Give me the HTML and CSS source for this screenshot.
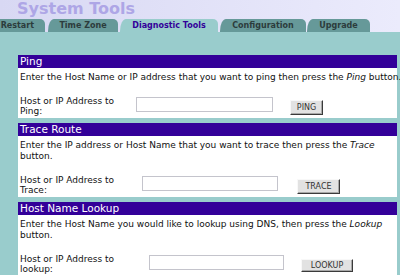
FILE: index.html
```html
<!DOCTYPE html>
<html>
<head>
<meta charset="utf-8">
<link rel="stylesheet" href="styles.css">
</head>
<body>
<div class="masthead">
  <div class="title">System Tools</div>
  <div class="tabs">
    <div class="tab tab-restart">Restart</div>
    <div class="tab tab-time">Time Zone</div>
    <div class="tab tab-diag active">Diagnostic Tools</div>
    <div class="tab tab-config">Configuration</div>
    <div class="tab tab-upgrade">Upgrade</div>
  </div>
</div>
<div class="content">
  <div class="panel">
    <div class="panel-head">Ping</div>
    <div class="panel-body">
      <div class="desc">Enter the Host Name or IP address that you want to ping then press the <i>Ping</i> button.</div>
      <div class="form-row">
        <div class="label label-ping">Host or IP Address to<br>Ping:</div>
        <div class="field"></div>
        <div class="btn btn-ping">PING</div>
      </div>
    </div>
  </div>
  <div class="panel">
    <div class="panel-head">Trace Route</div>
    <div class="panel-body">
      <div class="desc">Enter the IP address or Host Name that you want to trace then press the <i>Trace</i><br>button.</div>
      <div class="form-row">
        <div class="label label-trace">Host or IP Address to<br>Trace:</div>
        <div class="field field-trace"></div>
        <div class="btn btn-trace">TRACE</div>
      </div>
    </div>
  </div>
  <div class="panel">
    <div class="panel-head">Host Name Lookup</div>
    <div class="panel-body">
      <div class="desc">Enter the Host Name you would like to lookup using DNS, then press the <i>Lookup</i><br>button.</div>
      <div class="form-row">
        <div class="label label-lookup">Host or IP Address to<br>lookup:</div>
        <div class="field field-lookup"></div>
        <div class="btn btn-lookup">LOOKUP</div>
      </div>
    </div>
  </div>
</div>
</body>
</html>
```
FILE: styles.css
```css
html, body {
  margin: 0;
  padding: 0;
  background: #99cccc;
  font-family: "DejaVu Sans", Verdana, sans-serif;
  overflow: hidden;
}
.masthead {
  height: 32px;
  background: linear-gradient(to right, #d8d8f3, #ebebfc);
  display: flex;
  flex-direction: column;
}
.title {
  height: 19px;
  line-height: 17px;
  font-size: 16px;
  font-weight: bold;
  color: #aea6e6;
  padding-left: 17px;
  white-space: nowrap;
}
.tabs {
  display: flex;
  gap: 2px;
  height: 13px;
  margin-left: -11px;
}
.tab {
  height: 13px;
  line-height: 14px;
  font-size: 8px;
  font-weight: bold;
  color: #2c3c3c;
  background: #669999;
  text-align: center;
  white-space: nowrap;
  border-radius: 6px 5px 0 0 / 12px 5px 0 0;
}
.tab.active {
  background: #99cccc;
  color: #330099;
}
.tab-restart { width: 56px; text-align: right; padding-right: 11px; box-sizing: border-box; }
.tab-time { width: 70px; margin-left: 1px; }
.tab-diag { width: 98px; }
.tab-config { width: 86px; }
.tab-upgrade { width: 63px; margin-left: -1px; }

.content {
  padding: 23px 3px 0 18px;
  display: flex;
  flex-direction: column;
  gap: 5px;
}
.panel-head {
  height: 13px;
  line-height: 13px;
  background: #330099;
  color: #ffffff;
  font-size: 10.5px;
  padding-left: 2px;
  white-space: nowrap;
}
.panel-body {
  background: #ffffff;
  padding: 4px 2px 1px 2px;
  font-size: 9px;
  color: #111111;
}
.desc {
  line-height: 11px;
  white-space: nowrap;
  margin-bottom: 13px;
}
.form-row {
  display: flex;
  align-items: flex-start;
  height: 21px;
}
.label {
  line-height: 10px;
  white-space: nowrap;
  flex: none;
}
.label-ping { width: 116px; }
.label-trace { width: 122px; }
.label-lookup { width: 129px; }
.field {
  width: 137px;
  height: 15px;
  box-sizing: border-box;
  border: 1px solid #c4c4cc;
  background: #ffffff;
  margin-top: 1px;
  flex: none;
}
.field-trace { width: 136px; }
.field-lookup { width: 135px; }
.btn {
  height: 15px;
  box-sizing: border-box;
  margin-top: 4px;
  font-size: 8px;
  line-height: 13px;
  text-align: center;
  color: #333333;
  background: #e2e2e2;
  border: 1px solid;
  border-color: #f8f8f8 #3a3a3a #3a3a3a #f8f8f8;
  box-shadow: inset -1px -1px 0 #a8a8a8;
  flex: none;
}
.btn-ping { width: 33px; margin-left: 17px; }
.btn-trace { width: 43px; margin-left: 19px; }
.btn-lookup { width: 52px; margin-left: 17px; height: 13px; line-height: 11px; margin-top: 5px; }
```
